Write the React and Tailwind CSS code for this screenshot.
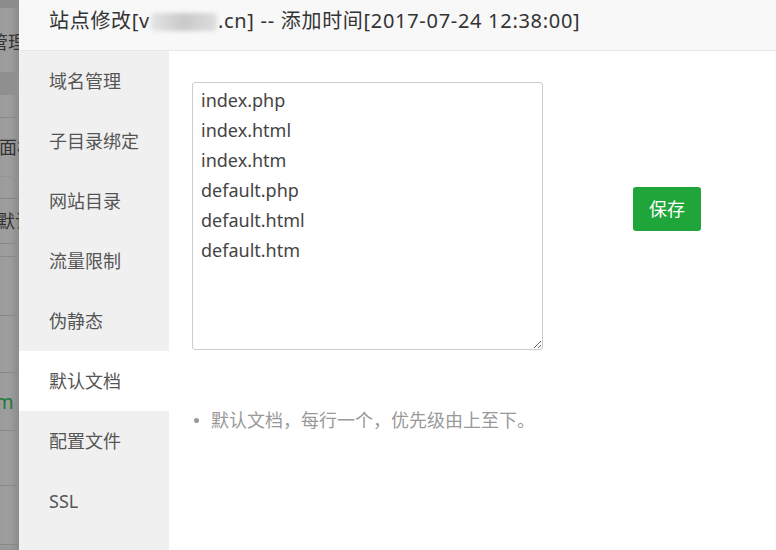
import React from 'react';

const tabs = ['域名管理', '子目录绑定', '网站目录', '流量限制', '伪静态', '默认文档', '配置文件', 'SSL'];
const files = ['index.php', 'index.html', 'index.htm', 'default.php', 'default.html', 'default.htm'];

function BackdropStrip() {
  // the dimmed page peeking out behind the modal
  return (
    <div className="relative w-[19px] shrink-0 overflow-hidden bg-[#9d9d9d] text-[18px] leading-none text-[#333] shadow-[inset_-4px_0_6px_rgba(0,0,0,0.12)]">
      <div className="h-[8px] bg-[#8c8c8c]" />
      <div className="flex h-[64px] items-center pt-[4px]">
        <span className="ml-[-10px] whitespace-nowrap">管理</span>
      </div>
      <div className="h-[23px] bg-[#8f8f8f]" />
      <div className="h-[23px] border-b border-[#8a8a8a]" />
      <div className="flex h-[59px] items-center border-b border-[#959595]">
        <span className="ml-[-1px] whitespace-nowrap">面板</span>
      </div>
      <div className="h-[22px] border-b border-[#868686]" />
      <div className="flex h-[45px] items-center border-b border-[#888]">
        <span className="ml-[-3px] whitespace-nowrap">默认</span>
      </div>
      <div className="h-[13px] border-b border-[#8a8a8a]" />
      <div className="h-[59px] border-b border-[#888]" />
      <div className="h-[57px] border-b border-[#888]" />
      <div className="flex h-[58px] items-center border-b border-[#888]">
        <span className="ml-[-5px] whitespace-nowrap text-[20px] text-[#1f7a3a]">m</span>
      </div>
      <div className="h-[55px] border-b border-[#888]" />
      <div className="h-[59px] border-b border-[#888]" />
    </div>
  );
}

export default function App() {
  return (
    <div
      className="flex h-[550px] w-[776px] overflow-hidden bg-white"
      style={{ fontFamily: '"Noto Sans", "Noto Sans CJK SC", sans-serif' }}
    >
      <BackdropStrip />

      <div className="flex min-w-0 flex-1 flex-col bg-white">
        {/* Title bar */}
        <div className="h-[51px] shrink-0 border-b border-[#e8e8e8] bg-[#f8f8f8] pl-[30px] pt-[6px] text-[20px] leading-[30px] tracking-[0.7px] text-[#333] whitespace-nowrap">
          站点修改[v
          <span className="mx-[1px] inline-block h-[18px] w-[66px] translate-y-[3px] rounded-sm bg-gradient-to-r from-[#e4e4e4] via-[#c9c9c9] to-[#dedede] blur-[2px]" />
          .cn] -- 添加时间[2017-07-24 12:38:00]
        </div>

        <div className="flex flex-1">
          {/* Side tabs */}
          <div className="w-[150px] shrink-0 bg-[#f0f0f0]">
            {tabs.map((t) => (
              <div
                key={t}
                className={`flex h-[60px] items-center pl-[30px] text-[18px] text-[#555] ${t === '默认文档' ? 'bg-white' : ''}`}
              >
                {t}
              </div>
            ))}
          </div>

          {/* Content */}
          <div className="flex-1 pl-[23px] pt-[31px]">
            <div className="flex">
              <textarea
                defaultValue={files.join('\n')}
                className="h-[268px] w-[351px] rounded-[3px] border border-[#ccc] px-[8px] py-[2px] text-[18px] leading-[30px] text-[#444] outline-none"
                style={{ fontFamily: '"Noto Sans", "Noto Sans CJK SC", sans-serif' }}
              />
              <button className="ml-[90px] mt-[105px] h-[44px] w-[68px] rounded-[3px] bg-[#20a53a] text-[18px] text-white">
                保存
              </button>
            </div>

            <ul className="mt-[58px] pl-[2px] text-[18px] leading-[24px] text-[#999]">
              <li className="flex items-center">
                <span className="mr-[12px] h-[5px] w-[5px] rounded-full bg-[#999]" />
                默认文档，每行一个，优先级由上至下。
              </li>
            </ul>
          </div>
        </div>
      </div>
    </div>
  );
}
